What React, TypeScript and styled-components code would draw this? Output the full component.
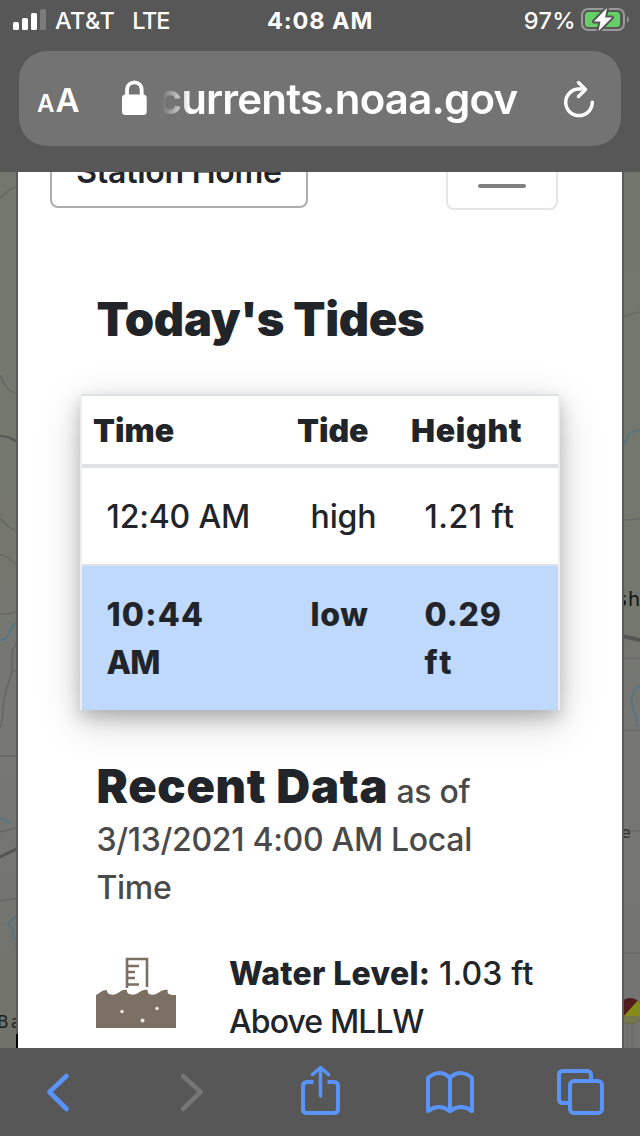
import React from "react";
import styled, { createGlobalStyle } from "styled-components";

const GlobalStyle = createGlobalStyle`
  *, *::before, *::after { box-sizing: border-box; }
  body {
    margin: 0;
    background: #575757;
    font-family: Inter, "Liberation Sans", sans-serif;
    -webkit-font-smoothing: antialiased;
  }
  svg { display: block; flex: none; }
`;

const Screen = styled.div`
  width: 640px;
  height: 1136px;
  display: flex;
  flex-direction: column;
  overflow: hidden;
`;

const BrowserTop = styled.header`
  height: 172px;
  flex: none;
  background: #575757;
  color: #fff;
`;

const StatusBar = styled.div`
  height: 51px;
  padding: 0 11px 0 13px;
  display: grid;
  grid-template-columns: 254px 1fr auto;
  align-items: start;
  line-height: 41px;
  font-size: 23.5px;
  font-weight: 500;
  letter-spacing: 0.4px;
  white-space: nowrap;
`;

const Carrier = styled.div`
  display: flex;
  gap: 8px;
`;

const SignalIcon = styled.svg`
  margin-top: 9px;
`;

const Network = styled.span`
  margin-left: 9px;
  letter-spacing: -1.2px;
`;

const Clock = styled.div`
  font-weight: 700;
  letter-spacing: 0.9px;
`;

const Battery = styled.div`
  display: flex;
  gap: 5px;
`;

const BatteryIcon = styled.svg`
  margin-top: 6px;
`;

const AddressBar = styled.div`
  height: 95px;
  margin: 0 19px;
  padding: 0 24px 0 18px;
  display: flex;
  align-items: center;
  border-radius: 28px;
  background: #737373;
`;

const TextSize = styled.div`
  width: 84px;
  padding-top: 6px;
  display: flex;
  align-items: baseline;
  gap: 1px;
  font-weight: 600;
  font-size: 33px;
  line-height: 88px;
`;

const SmallA = styled.span`
  font-size: 24px;
`;

const LockIcon = styled.svg`
  margin: -2px 0 0;
`;

const Url = styled.div`
  flex: 1;
  margin-left: 10.5px;
  line-height: 94px;
  font-size: 42px;
  font-weight: 600;
  letter-spacing: -0.8px;
  white-space: nowrap;
  mask-image: linear-gradient(to right, transparent 4px, #000 32px);
`;

const Viewport = styled.main`
  height: 876px;
  display: flex;
  flex: none;
  overflow: hidden;
`;

const Page = styled.section`
  width: 604px;
  height: 876px;
  background: #fff;
  color: #212529;
  overflow: hidden;
`;

const PageNav = styled.div`
  height: 38px;
  padding: 0 64px 0 32px;
  display: flex;
  align-items: flex-end;
  justify-content: space-between;
`;

const StationButton = styled.div`
  width: 258px;
  height: 76px;
  margin-bottom: 2px;
  border: 2px solid #adadad;
  border-radius: 8px;
  text-align: center;
  font-size: 32px;
  font-weight: 560;
  letter-spacing: -0.25px;
  line-height: 75px;
  white-space: nowrap;
`;

const MenuToggle = styled.div`
  width: 112px;
  height: 80px;
  padding: 0 30px 20px;
  display: flex;
  flex-direction: column;
  justify-content: flex-end;
  gap: 12px;
  border: 2px solid #e5e5e5;
  border-radius: 8px;
`;

const MenuLine = styled.span`
  height: 4px;
  border-radius: 2px;
  background: #7f7f7f;
`;

const Title = styled.h2`
  margin: 85px 0 0 78.5px;
  font-size: 47px;
  font-weight: 900;
  line-height: 48px;
  letter-spacing: -0.3px;
  white-space: nowrap;
`;

const TideTable = styled.div`
  width: 480px;
  margin: 51px 0 0 62px;
  border: solid #eceeef;
  border-width: 0 2px;
  background: #fff;
  background-clip: padding-box;
  box-shadow: 0 8px 16px rgba(0, 0, 0, 0.2), 0 12px 40px rgba(0, 0, 0, 0.19);
`;

const TideRow = styled.div<{ $kind: "head" | "plain" | "next" }>`
  display: grid;
  grid-template-columns: 204px 114px 1fr;
  padding: ${(p) => (p.$kind === "head" ? "11px 11px 9px" : "25px 24.5px 23px")};
  border-top: ${(p) => (p.$kind === "plain" ? "4px" : "2px")} solid #dee2e6;
  background: ${(p) => (p.$kind === "next" ? "#bfd9fd" : "#fff")};
  font-size: 32px;
  line-height: 48px;
  font-weight: ${(p) => (p.$kind === "head" ? 900 : p.$kind === "next" ? 800 : 500)};
`;

const TideCell = styled.div<{ $track?: number }>`
  letter-spacing: ${(p) => p.$track ?? 0}px;
`;

const Tracked = styled.span<{ $track: number }>`
  letter-spacing: ${(p) => p.$track}px;
`;

const Recent = styled.h2`
  width: 440px;
  margin: 58px 0 0 78.5px;
  font-size: 32px;
  font-weight: 530;
  line-height: 48px;
  letter-spacing: -0.3px;
  color: #4a4a4a;
`;

const RecentTitle = styled.strong`
  font-size: 47px;
  font-weight: 900;
  line-height: 0;
  letter-spacing: 0.7px;
  color: #212529;
`;

const Reading = styled.div`
  margin: 38px 0 0 78px;
  display: flex;
  gap: 53px;
  font-size: 32px;
  font-weight: 500;
  line-height: 48px;
`;

const ReadingIcon = styled.svg`
  margin-top: 7px;
`;

const Label = styled.strong`
  font-weight: 800;
  letter-spacing: 0.3px;
`;

const Toolbar = styled.footer`
  height: 88px;
  flex: none;
  background: #575757;
`;

function MapLeft() {
  return (
    <svg width="18" height="876" viewBox="0 172 18 876" fill="none">
      <defs>
        <linearGradient id="terrainLeft" x1="0" y1="0" x2="0" y2="1">
          <stop offset="0" stopColor="#74786c" />
          <stop offset="0.45" stopColor="#75776f" />
          <stop offset="0.65" stopColor="#777776" />
          <stop offset="1" stopColor="#717369" />
        </linearGradient>
      </defs>
      <rect y="172" width="18" height="876" fill="url(#terrainLeft)" />
      <g stroke="#606361" strokeWidth="1.2">
        <path d="M0 198C6 193 10 188 18 186M0 375C5 386 9 392 18 394M0 518C6 525 10 529 18 531M0 554C8 556 13 561 18 567M0 614H10L18 611M0 727C4 724 1 706 6 691L12 671V651L18 640M12 671H18M0 756H18M0 832L18 827M0 901L18 898" />
        <path d="M0 436C7 436 11 438 18 442" stroke="#555856" strokeWidth="2" />
        <path d="M0 857L18 848" stroke="#555" strokeWidth="3" />
      </g>
      <path d="M0 640C10 641 8 626 18 622M0 818C5 819 7 822 11 823M18 914L8 924L14 930L12 936L16 940V949" stroke="#587482" strokeWidth="2" />
      <text x="-3" y="1028" fill="#202020" fontFamily="DejaVu Sans" fontSize="17" letterSpacing="2">Ba</text>
      <rect x="16" y="172" width="2" height="862" fill="#595a57" />
      <rect x="16" y="1034" width="2" height="14" fill="#000" />
    </svg>
  );
}

function MapRight() {
  return (
    <svg width="18" height="876" viewBox="622 172 18 876" fill="none">
      <defs>
        <linearGradient id="terrainRight" x1="0" y1="0" x2="0" y2="1">
          <stop offset="0" stopColor="#73776b" />
          <stop offset="0.5" stopColor="#74776d" />
          <stop offset="0.65" stopColor="#767675" />
          <stop offset="1" stopColor="#737370" />
        </linearGradient>
        <clipPath id="pin">
          <ellipse cx="630" cy="1011" rx="13" ry="13" />
        </clipPath>
      </defs>
      <rect x="622" y="172" width="18" height="876" fill="url(#terrainRight)" />
      <g stroke="#656566" strokeWidth="1.2">
        <path d="M622 318C628 314 633 313 640 312M622 519C630 522 633 518 640 519M622 658H640M622 730H640M622 831H640M622 953H640" />
        <path d="M622 636L640 640" stroke="#555" strokeWidth="4" />
      </g>
      <path d="M622 447C629 442 624 431 640 430M640 686C630 690 630 708 635 713L638 727" stroke="#587482" strokeWidth="2" />
      <text x="617" y="606" fill="#111" fontFamily="DejaVu Sans" fontSize="19" letterSpacing="1">sh</text>
      <text x="621" y="838" fill="#333" fontFamily="DejaVu Sans" fontSize="16">e</text>
      <g clipPath="url(#pin)">
        <rect x="616" y="998" width="28" height="28" fill="#501d1e" />
        <path d="M622 1018L640 998V1018Z" fill="#858b18" />
        <rect x="616" y="1016" width="28" height="10" fill="#74764e" />
      </g>
      <path d="M628 1024V1048M632 1024V1048" stroke="#666" />
      <rect x="622" y="172" width="2" height="876" fill="#595a57" />
    </svg>
  );
}

export default function App() {
  return (
    <Screen>
      <GlobalStyle />
      <BrowserTop>
        <StatusBar>
          <Carrier>
            <SignalIcon width="34" height="21" viewBox="0 0 34 21" fill="#fff">
              <rect y="13" width="6" height="8" rx="1.6" />
              <rect x="9" y="9" width="6" height="12" rx="1.6" />
              <rect x="18" y="4" width="6" height="17" rx="1.6" />
              <rect x="27" width="6" height="21" rx="1.6" fill="#7c7c7c" />
            </SignalIcon>
            <span>AT&amp;T</span>
            <Network>LTE</Network>
          </Carrier>
          <Clock>4:08 AM</Clock>
          <Battery>
            <span>97%</span>
            <BatteryIcon width="48" height="28" viewBox="0 0 48 28">
              <rect x="1" y="3" width="42" height="21" rx="6" fill="none" stroke="#9a9a9a" strokeWidth="2" />
              <rect x="4" y="6" width="35" height="15" rx="3.5" fill="#65cf67" />
              <path d="M46 10C48.2 11.5 48.2 15.5 46 17Z" fill="#9a9a9a" />
              <path d="M26 2L13 15.5H19.5L17.5 25L31 11.5H24Z" fill="#fff" stroke="#575757" strokeWidth="4" strokeLinejoin="round" paintOrder="stroke" />
            </BatteryIcon>
          </Battery>
        </StatusBar>
        <AddressBar>
          <TextSize>
            <SmallA>A</SmallA>
            <span>A</span>
          </TextSize>
          <LockIcon width="26" height="36" viewBox="0 0 26 36">
            <rect x="1" y="14.500" width="24.700" height="20.500" rx="3.500" fill="#fff" />
            <path d="M6 17V10.500C6 -0.300 20.700 -0.300 20.700 10.500V17" fill="none" stroke="#fff" strokeWidth="3.800" />
          </LockIcon>
          <Url>currents.noaa.gov</Url>
          <svg width="34" height="40" viewBox="0 0 34 40" fill="none" stroke="#fff" strokeWidth="3.500" strokeLinecap="round" strokeLinejoin="round">
            <path d="M18 10H16A13.300 13.300 0 1 0 29.300 23.300" />
            <path d="M15.500 3.500L22.500 10.500L15.500 17.500" />
          </svg>
        </AddressBar>
      </BrowserTop>

      <Viewport>
        <MapLeft />
        <Page>
          <PageNav>
            <StationButton>Station Home</StationButton>
            <MenuToggle>
              <MenuLine />
              <MenuLine />
              <MenuLine />
            </MenuToggle>
          </PageNav>
          <Title>Today's Tides</Title>
          <TideTable>
            <TideRow $kind="head">
              <TideCell>Time</TideCell>
              <TideCell>Tide</TideCell>
              <TideCell $track={0.7}>Height</TideCell>
            </TideRow>
            <TideRow $kind="plain">
              <TideCell $track={-0.15}>12:40 AM</TideCell>
              <TideCell $track={-0.1}>high</TideCell>
              <TideCell $track={0.5}>1.21 ft</TideCell>
            </TideRow>
            <TideRow $kind="next">
              <TideCell $track={1.2}>
                10:44
                <br />
                <Tracked $track={-1}>AM</Tracked>
              </TideCell>
              <TideCell $track={0.6}>low</TideCell>
              <TideCell $track={0.8}>
                0.29
                <br />
                <Tracked $track={3}>ft</Tracked>
              </TideCell>
            </TideRow>
          </TideTable>
          <Recent>
            <RecentTitle>Recent Data</RecentTitle> as of
            <br />
            3/13/2021 4:00 AM Local
            <br />
            Time
          </Recent>
          <Reading>
            <ReadingIcon width="80" height="72" viewBox="0 0 80 72" fill="#7b7063">
              <path d="M31 31V2H51V30M31 9H43M31 15H39M31 21H39M31 27.5H43" fill="none" stroke="#7b7063" strokeWidth="2.6" />
              <path d="M0 38C4 36 6 33 11 33C10 38 18 39 22 36C25 34 27 32 31 33C30 38 38 39 42 36C45 34 48 32 52 33C50 38 58 39 62 36C65 34 68 32 72 33C70 37 75 38 80 38V71H0Z" />
              <g fill="#eeeae5">
                <circle cx="26" cy="54.500" r="1.700" />
                <circle cx="61" cy="51.500" r="1.700" />
                <circle cx="46.500" cy="63.500" r="2" />
              </g>
            </ReadingIcon>
            <div>
              <Label>Water Level:</Label> <Tracked $track={0.2}>1.03 ft</Tracked>
              <br />
              <Tracked $track={-0.9}>Above MLLW</Tracked>
            </div>
          </Reading>
        </Page>
        <MapRight />
      </Viewport>

      <Toolbar>
        <svg width="640" height="88" viewBox="0 1048 640 88" fill="none" stroke="#5b94f8" strokeWidth="4" strokeLinecap="round" strokeLinejoin="round">
          <path d="M66.500 1076L49.500 1092L66.500 1109" strokeWidth="4.600" />
          <path d="M183 1076L200.500 1092L183 1109" stroke="#757575" strokeWidth="4.600" />
          <path d="M313.500 1082H307Q303 1082 303 1086V1109Q303 1113 307 1113H334Q338 1113 338 1109V1086Q338 1082 334 1082H327.500" strokeLinecap="butt" />
          <path d="M320.500 1096V1069M312.500 1074.500L320.500 1067.500L328.500 1074.500" strokeWidth="3.500" />
          <path d="M450 1078C443 1071 434 1072 428 1078V1111C435 1106 443 1106 450 1111C457 1106 465 1106 472 1111V1078C466 1072 457 1071 450 1078V1111" />
          <path d="M568 1103H563Q559 1103 559 1099V1075Q559 1071 563 1071H587Q591 1071 591 1075V1080" strokeLinecap="butt" />
          <rect x="570" y="1081" width="32" height="32" rx="4" />
        </svg>
      </Toolbar>
    </Screen>
  );
}
